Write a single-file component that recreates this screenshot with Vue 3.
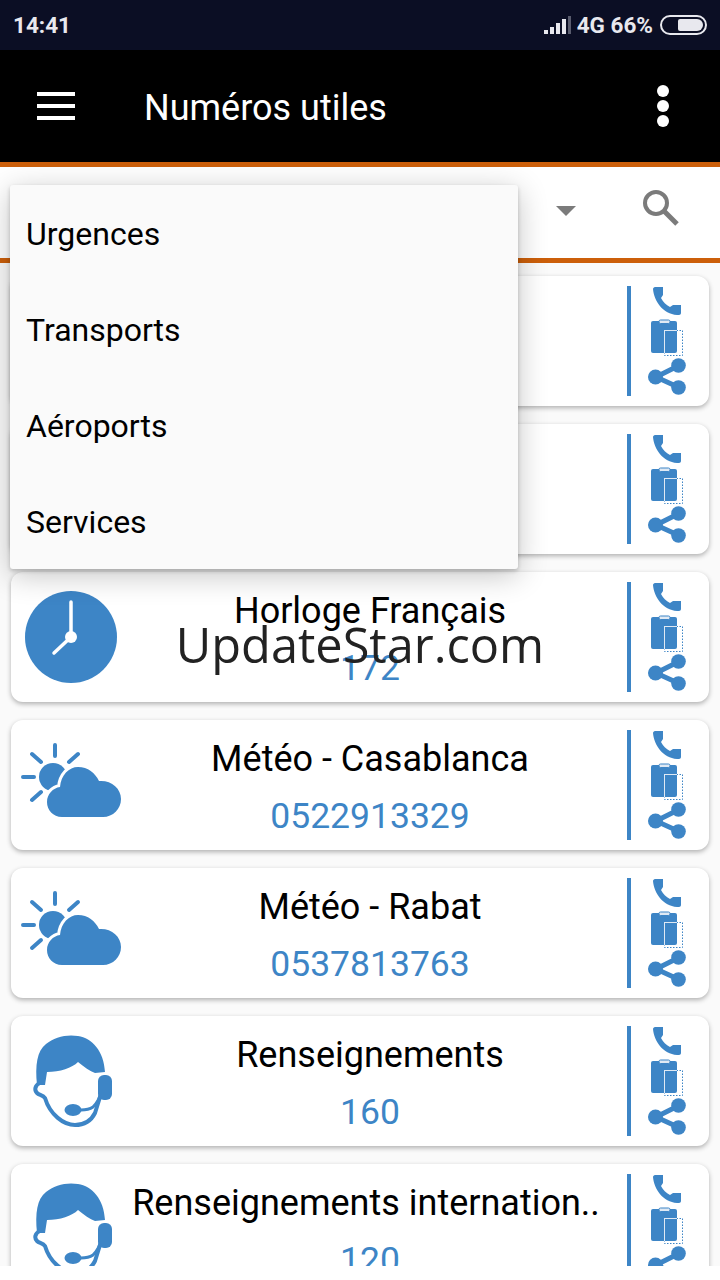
<template>
  <div class="screen">
    <div class="status">
      <span class="time">14:41</span>
      <div class="status-right">
        <svg class="signal" width="28" height="20" viewBox="0 0 28 20">
          <rect x="0" y="15" width="4" height="4" fill="#e8e8ee" />
          <rect x="6" y="12" width="4" height="7" fill="#e8e8ee" />
          <rect x="12" y="8" width="4" height="11" fill="#e8e8ee" />
          <rect x="18" y="4" width="4" height="15" fill="#e8e8ee" />
          <rect x="24" y="1" width="3" height="18" fill="#5a5c6e" />
        </svg>
        <span>4G 66%</span>
        <div class="battery"><div class="battery-level"></div></div>
      </div>
    </div>

    <div class="appbar">
      <div class="burger"><i></i><i></i><i></i></div>
      <div class="appbar-title">Numéros utiles</div>
      <div class="dots"><i></i><i></i><i></i></div>
    </div>

    <div class="filter">
      <div class="caret"></div>
      <svg class="search" width="40" height="40" viewBox="0 0 40 40">
        <circle cx="16" cy="15" r="11" fill="none" stroke="#7b7b7b" stroke-width="4" />
        <path d="M24 23 L37 36" stroke="#7b7b7b" stroke-width="5" fill="none" />
      </svg>
    </div>

    <div class="list">
      <div class="card" v-for="(item, i) in items" :key="i">
        <div class="pic">
          <svg v-if="item.icon === 'clock'" width="92" height="92" viewBox="0 0 92 92">
            <circle cx="46" cy="46" r="46" fill="#3d85c6" />
            <path d="M46 11 V46 L29 62" fill="none" stroke="#fff" stroke-width="3.5" stroke-linecap="round" />
            <circle cx="46" cy="46" r="6" fill="#fff" />
          </svg>
          <svg v-else-if="item.icon === 'weather'" class="weather" width="102" height="76" viewBox="0 0 102 76">
            <g stroke="#3d85c6" stroke-width="4" stroke-linecap="round">
              <path d="M35 3 V14 M12 12 L21 20 M58 12 L49 20 M3 35 H14 M12 58 L21 50" />
            </g>
            <circle cx="33" cy="35" r="14" fill="#3d85c6" />
            <path d="M42 75 C33 75 27 68 27 60 C27 52 33 46 40 45 C41 33 49 25 58 25 C68 25 75 31 79 39 C91 38 101 46 101 57 C101 67 93 75 83 75 Z" fill="#3d85c6" stroke="#fff" stroke-width="6" paint-order="stroke" />
          </svg>
          <svg v-else-if="item.icon === 'agent'" class="agent" width="78" height="92" viewBox="0 0 78 92">
            <path d="M3 50 C1 30 3 16 12 9 C20 2 33 -1 44 1 C58 3 70 16 71 37 L61 38 C56 36 50 32 44 27 C38 33 26 37 13 37 L11 50 Z" fill="#3d85c6" />
            <path d="M6 48 C1 50 0 55 3 58 C5 60 9 60 11 63 C16 80 30 90 41 90 C50 90 57 86 61 78 L66 62" fill="none" stroke="#3d85c6" stroke-width="4" />
            <rect x="64" y="40" width="14" height="25" rx="6" fill="#3d85c6" />
            <path d="M47 75 C52 75 56 74 59 72 C62 69 65 65 66 60" fill="none" stroke="#3d85c6" stroke-width="3" />
            <ellipse cx="39" cy="75" rx="8.5" ry="6" fill="#3d85c6" />
          </svg>
        </div>
        <div class="info">
          <div class="title" :class="{ long: item.long }">{{ item.title }}</div>
          <div class="number">{{ item.number }}</div>
        </div>
        <div class="actions">
          <svg class="phone" width="28" height="28" viewBox="0 0 28 28">
            <path d="M2 0 H10 V8 L8 11 C10 15 13 18 17 20 L20 18 H28 V26 C28 27 27 28 26 28 H24 C10 27 1 14 0 2 C0 1 1 0 2 0 Z" fill="#3d85c6" />
          </svg>
          <svg class="copy" width="32" height="37" viewBox="0 0 32 37">
            <rect x="0" y="2" width="26" height="32" rx="2" fill="#3d85c6" />
            <rect x="8" y="1" width="11" height="3.5" rx="1.5" fill="#dfe9f4" stroke="#3d85c6" stroke-width="1" />
            <rect x="13.5" y="11.5" width="18" height="25" fill="none" stroke="#3d85c6" stroke-dasharray="1.5 1.5" />
            <rect x="13" y="11" width="1" height="23" fill="#dfe9f4" />
            <rect x="14" y="11" width="12" height="1" fill="#dfe9f4" />
          </svg>
          <svg class="share" width="38" height="37" viewBox="0 0 38 37">
            <path d="M8 19 L30 8 M8 19 L30 29" stroke="#3d85c6" stroke-width="5" />
            <circle cx="7.5" cy="19" r="7.5" fill="#3d85c6" />
            <circle cx="30.5" cy="7.5" r="7.3" fill="#3d85c6" />
            <circle cx="30.5" cy="29.5" r="7.3" fill="#3d85c6" />
          </svg>
        </div>
      </div>
    </div>

    <div class="menu">
      <div class="menu-item" v-for="m in menu" :key="m">{{ m }}</div>
    </div>

    <div class="watermark">UpdateStar.com</div>
  </div>
</template>

<script setup>
const menu = ['Urgences', 'Transports', 'Aéroports', 'Services']
const items = [
  { icon: '', title: '', number: '' },
  { icon: '', title: '', number: '' },
  { icon: 'clock', title: 'Horloge Français', number: '172' },
  { icon: 'weather', title: 'Météo - Casablanca', number: '0522913329' },
  { icon: 'weather', title: 'Météo - Rabat', number: '0537813763' },
  { icon: 'agent', title: 'Renseignements', number: '160' },
  { icon: 'agent', title: 'Renseignements internation..', number: '120', long: true }
]
</script>

<style>
html, body { margin: 0; background: #fff; }
</style>

<style scoped>
.screen {
  position: relative;
  width: 720px;
  height: 1280px;
  overflow: hidden;
  background: #fff;
  font-family: Roboto, "Liberation Sans", sans-serif;
}
.status {
  height: 50px;
  background: #0b0e24;
  color: #e8e8ee;
  display: flex;
  align-items: center;
  justify-content: space-between;
  padding: 0 13px;
  font-size: 22.5px;
  font-weight: 700;
}
.status-right {
  display: flex;
  align-items: center;
  gap: 7px;
}
.signal {
  margin-right: -2px;
}
.battery {
  width: 47px;
  height: 20px;
  border: 2px solid #e8e8ee;
  border-radius: 10px;
  padding: 2px 2px 2px 16px;
  box-sizing: border-box;
  display: flex;
}
.battery-level {
  flex: 1;
  background: #e8e8ee;
  border-radius: 2px 6px 6px 2px;
}
.appbar {
  height: 112px;
  background: #000;
  border-bottom: 5px solid #cc5f0a;
  display: flex;
  align-items: center;
  color: #fff;
  padding: 0 51px 0 37px;
}
.burger {
  width: 38px;
  display: flex;
  flex-direction: column;
  gap: 8px;
}
.burger i {
  height: 4px;
  background: #fff;
}
.appbar-title {
  flex: 1;
  margin: 3px 0 0 69px;
  font-size: 36px;
}
.dots {
  display: flex;
  flex-direction: column;
  gap: 3px;
}
.dots i {
  width: 12px;
  height: 12px;
  border-radius: 50%;
  background: #fff;
}
.filter {
  height: 81px;
  background: #fff;
  border-bottom: 5px solid #cc5f0a;
  display: flex;
  align-items: center;
  justify-content: flex-end;
  padding: 0 40px 10px 0;
  gap: 64px;
}
.caret {
  width: 0;
  height: 0;
  margin-top: 6px;
  border-left: 10px solid transparent;
  border-right: 10px solid transparent;
  border-top: 10px solid #7b7b7b;
}
.list {
  height: 1003px;
  box-sizing: border-box;
  overflow: hidden;
  background: #fafafa;
  padding: 13px 11px;
  display: flex;
  flex-direction: column;
  gap: 18px;
}
.card {
  flex: none;
  height: 130px;
  background: #fff;
  border-radius: 12px;
  box-shadow: 0 2px 5px rgba(0, 0, 0, 0.3);
  display: flex;
  align-items: center;
}
.pic {
  width: 120px;
  display: flex;
  justify-content: center;
}
.pic svg {
  overflow: visible;
}
.weather {
  margin-bottom: 10px;
}
.agent {
  margin-left: 4px;
}
.info {
  flex: 1;
  min-width: 0;
  margin-right: 18px;
  text-align: center;
  padding-top: 5px;
  white-space: nowrap;
}
.title {
  font-size: 36px;
  line-height: 40px;
  color: #000;
  height: 40px;
}
.title.long {
  padding-right: 8px;
}
.number {
  margin-top: 17px;
  font-size: 35.5px;
  line-height: 40px;
  height: 40px;
  color: #3d85c6;
}
.actions {
  width: 76px;
  height: 110px;
  margin-right: 6px;
  border-left: 4px solid #3d85c6;
  box-sizing: border-box;
  display: flex;
  flex-direction: column;
  align-items: center;
  flex: none;
}
.phone {
  margin-top: 1px;
}
.copy {
  margin-top: 4px;
}
.share {
  margin-top: 2px;
}
.menu {
  position: absolute;
  left: 10px;
  top: 185px;
  width: 508px;
  height: 384px;
  background: #fafafa;
  border-radius: 3px;
  box-shadow: 0 2px 4px rgba(0, 0, 0, 0.2), 0 6px 30px rgba(0, 0, 0, 0.24);
}
.menu-item {
  height: 96px;
  box-sizing: border-box;
  padding: 2px 0 0 16px;
  display: flex;
  align-items: center;
  font-size: 32px;
  color: #000;
}
.watermark {
  position: absolute;
  left: 0;
  width: 720px;
  top: 612px;
  text-align: center;
  font-family: "Open Sans", sans-serif;
  font-size: 48.7px;
  line-height: 64px;
  color: #222;
}
</style>
